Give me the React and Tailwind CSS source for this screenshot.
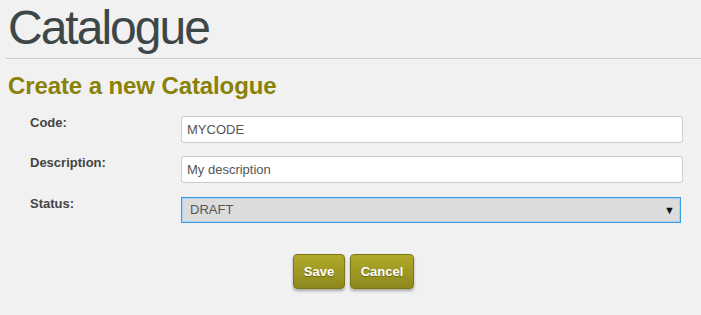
import React from 'react';

const fields = [
  { label: 'Code:', value: 'MYCODE' },
  { label: 'Description:', value: 'My description' },
];

const App = () => {
  return (
    <div className="min-h-screen bg-[#f1f1f1] pl-[6px] font-['Liberation_Sans',Arial,sans-serif]">
      {/* Page title */}
      <h1 className="pt-[4px] pl-[2px] text-[48px] leading-[48px] tracking-[-2px] text-[#3e4748]">
        Catalogue
      </h1>
      <div className="mt-[6px] h-px bg-[#cccccc]" />

      <h2 className="mt-[15px] pl-[2px] text-[24px] leading-[24px] font-bold tracking-[-0.1px] text-[#8a8108]">
        Create a new Catalogue
      </h2>

      {/* Form */}
      <div className="mt-[18px] pl-[24px]">
        {fields.map((f, i) => (
          <div key={f.label} className={`flex ${i === 0 ? '' : 'mt-[13px]'}`}>
            <label className="w-[151px] shrink-0 text-[13px] leading-[13px] font-bold text-[#444444]">
              {f.label}
            </label>
            <div className="flex h-[27px] w-[502px] items-center rounded-[3px] border border-[#cccccc] bg-white px-[5px] text-[13px] text-[#555555]">
              {f.value}
            </div>
          </div>
        ))}

        <div className="mt-[14px] flex">
          <label className="w-[151px] shrink-0 text-[13px] leading-[13px] font-bold text-[#444444]">
            Status:
          </label>
          <div className="flex h-[26px] w-[500px] items-center justify-between border border-[#3d9be0] bg-[#dcdcdc] pl-[8px] pr-[5px] text-[13px] text-[#555555] shadow-[inset_0_0_0_1px_#a9d0f0]">
            <span>DRAFT</span>
            <span className="text-[11px] leading-none text-[#111111]">▼</span>
          </div>
        </div>
      </div>

      {/* Actions */}
      <div className="mt-[31px] flex gap-[5px] pl-[287px]">
        <button className="h-[35px] w-[52px] rounded-[4px] border border-[#7b7616] bg-gradient-to-b from-[#b1aa2c] to-[#8d881d] text-[13px] font-bold text-white shadow-[0_2px_3px_rgba(0,0,0,0.3)] [text-shadow:0_1px_1px_rgba(0,0,0,0.3)]">
          Save
        </button>
        <button className="h-[35px] w-[64px] rounded-[4px] border border-[#7b7616] bg-gradient-to-b from-[#b1aa2c] to-[#8d881d] text-[13px] font-bold text-white shadow-[0_2px_3px_rgba(0,0,0,0.3)] [text-shadow:0_1px_1px_rgba(0,0,0,0.3)]">
          Cancel
        </button>
      </div>
    </div>
  );
};

export default App;
